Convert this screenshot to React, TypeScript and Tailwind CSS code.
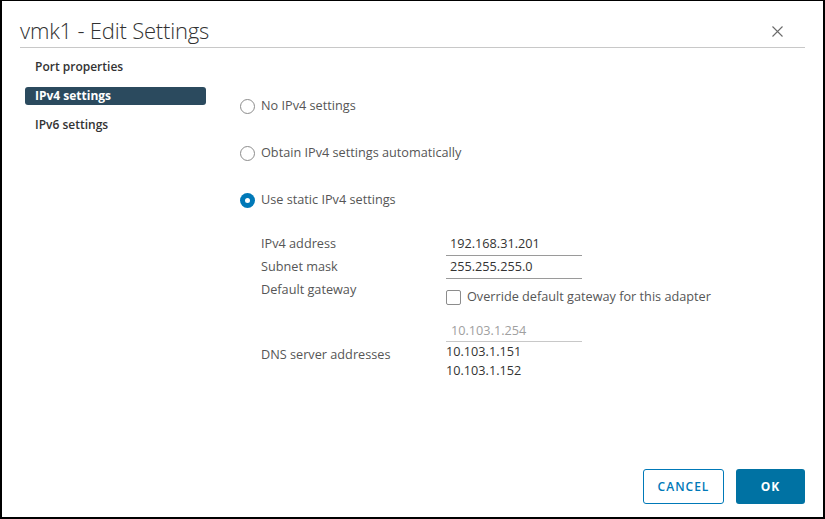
import React from "react";

const navItems = ["Port properties", "IPv4 settings", "IPv6 settings"];

const Radio = ({ checked, label }: { checked?: boolean; label: string }) => (
    <div className="flex items-center h-[20px]">
        {checked ? (
            <span className="w-[15px] h-[15px] rounded-full bg-[#0079b8] flex items-center justify-center">
                <span className="w-[5px] h-[5px] rounded-full bg-white"></span>
            </span>
        ) : (
            <span className="w-[15px] h-[15px] rounded-full border border-[#8c8c8c] bg-white"></span>
        )}
        <span className="ml-[6px] text-[12.7px] text-[#565656]">{label}</span>
    </div>
);

const App: React.FC = () => {
    return (
        <div className="w-[825px] h-[519px] bg-white border-2 border-t border-black flex flex-col font-['Open_Sans',sans-serif] overflow-hidden">
            <div className="mx-[18px] h-[47px] border-b border-[#c8c8c8] flex items-end justify-between pb-[2px]">
                <h1 className="text-[22px] font-light text-[#313131] leading-[30px] tracking-[-0.2px]">vmk1 - Edit Settings</h1>
                <svg width="11" height="11" viewBox="0 0 11 11" className="mr-[22px] mb-[8px]">
                    <path d="M0.5 0.5 L10.5 10.5 M10.5 0.5 L0.5 10.5" stroke="#6a6a6a" strokeWidth="1.1" fill="none" />
                </svg>
            </div>
            <div className="flex flex-1">
                <div className="w-[204px] pl-[23px] pt-[10px] flex flex-col gap-[11px]">
                    {navItems.map((n, i) => (
                        <div
                            key={n}
                            className={
                                i === 1
                                    ? "h-[18px] rounded-[3px] bg-[#2b4a5e] text-white text-[12px] font-bold pl-[10px] leading-[18px]"
                                    : "h-[18px] text-[#333] text-[12px] font-semibold pl-[10px] leading-[18px]"
                            }
                        >
                            {n}
                        </div>
                    ))}
                </div>
                <div className="flex-1 pl-[34px] pt-[48px] flex flex-col">
                    <div className="flex flex-col gap-[27px]">
                        <Radio label="No IPv4 settings" />
                        <Radio label="Obtain IPv4 settings automatically" />
                        <Radio checked label="Use static IPv4 settings" />
                    </div>
                    <div className="pl-[21px] mt-[23px] grid grid-cols-[185px_136px] text-[12.7px] text-[#565656]">
                        <div className="h-[23px] leading-[20px]">IPv4 address</div>
                        <div className="h-[23px] border-b border-[#9a9a9a] text-[#333] leading-[20px] pl-[4px]">192.168.31.201</div>
                        <div className="h-[23px] leading-[20px]">Subnet mask</div>
                        <div className="h-[23px] border-b border-[#9a9a9a] text-[#333] leading-[20px] pl-[4px]">255.255.255.0</div>
                        <div className="leading-[20px]">Default gateway</div>
                        <div className="pt-[10px] w-[330px]">
                            <div className="flex items-center h-[16px]">
                                <span className="w-[15px] h-[15px] rounded-[2px] border border-[#8c8c8c]"></span>
                                <span className="ml-[6px] text-[#565656]">Override default gateway for this adapter</span>
                            </div>
                            <div className="w-[136px] mt-[15px] h-[22px] border-b border-[#c8c8c8] text-[#a0a0a0] pl-[5px] leading-[20px]">10.103.1.254</div>
                        </div>
                        <div className="pt-[2px] leading-[20px]">DNS server addresses</div>
                        <div className="text-[#333] leading-[19px]">
                            <div>10.103.1.151</div>
                            <div>10.103.1.152</div>
                        </div>
                    </div>
                    <div className="flex-1"></div>
                    <div className="flex justify-end gap-[12px] pr-[18px] pb-[13px]">
                        <button className="w-[81px] h-[35px] border border-[#0079b8] rounded-[3px] text-[#0079b8] text-[12px] font-semibold tracking-[1px]">CANCEL</button>
                        <button className="w-[69px] h-[35px] bg-[#0072a3] rounded-[3px] text-white text-[12px] font-bold tracking-[1px]">OK</button>
                    </div>
                </div>
            </div>
        </div>
    );
};

export default App;
